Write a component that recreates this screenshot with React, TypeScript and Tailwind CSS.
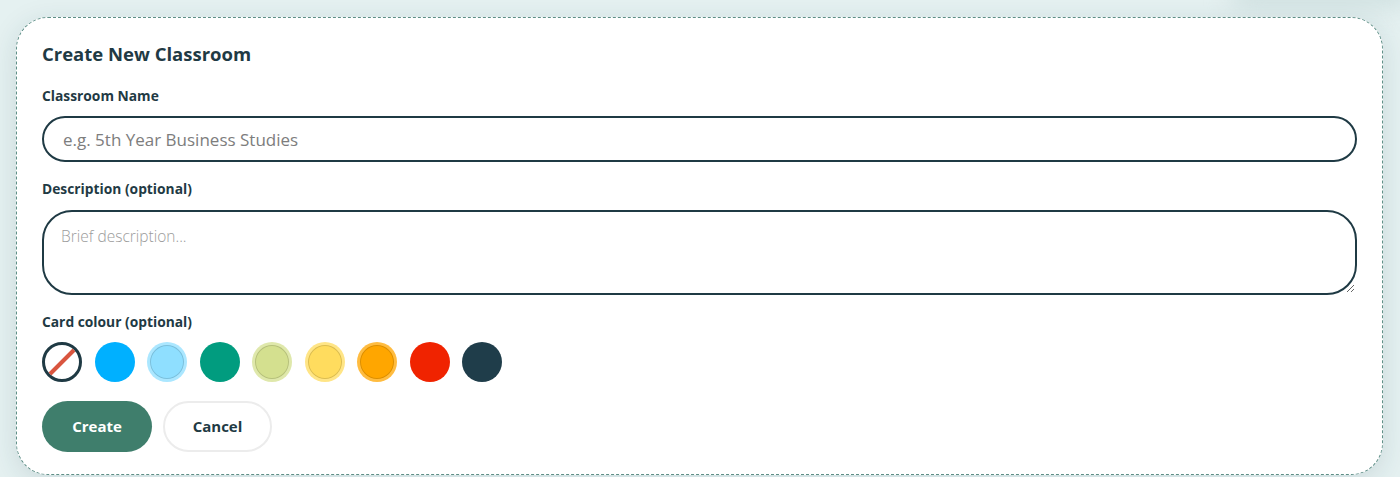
import React, { useState } from "react";

const swatches = [
  { id: "none", bg: "", ring: false },
  { id: "blue", bg: "bg-[#00b0ff]", ring: false },
  { id: "sky", bg: "bg-[#8fdfff]", ring: true },
  { id: "teal", bg: "bg-[#019c7f]", ring: false },
  { id: "lime", bg: "bg-[#d4e08f]", ring: true },
  { id: "yellow", bg: "bg-[#ffdc5e]", ring: true },
  { id: "orange", bg: "bg-[#ffa600]", ring: true },
  { id: "red", bg: "bg-[#f02300]", ring: false },
  { id: "navy", bg: "bg-[#1f3d4a]", ring: false },
];

export default function App() {
  const [colour, setColour] = useState("none");

  return (
    <div
      className="relative min-h-screen overflow-hidden bg-[#e5f1f1] px-[16px] pt-[17px] pb-[2px]"
      style={{ fontFamily: "'Open Sans', Lato, sans-serif" }}
    >
      <div className="absolute right-[-10px] top-[-22px] h-[30px] w-[180px] rounded-full bg-[#cfe0e0] blur-md" />

      <div className="relative mr-[1px] rounded-[32px] border border-dashed border-[#5f8f87] bg-white px-[25px] pt-[22px] pb-[22px] shadow-[0_6px_28px_rgba(31,61,74,0.13)]">
        <h2 className="text-[18.5px] leading-[28px] font-bold text-[#1f3a44]">
          Create New Classroom
        </h2>

        <form>
          <label
            htmlFor="name"
            className="mt-[18px] block text-[13.8px] leading-[20px] font-bold text-[#1f3a44]"
          >
            Classroom Name
          </label>
          <input
            id="name"
            type="text"
            placeholder="e.g. 5th Year Business Studies"
            className="mt-[10px] block h-[46px] w-full rounded-full border-2 border-[#1f3a44] bg-white px-[19px] text-[17px] text-[#1f3a44] outline-none placeholder:text-[#7d7d7d]"
          />

          <label
            htmlFor="description"
            className="mt-[17px] block text-[13.8px] leading-[20px] font-bold text-[#1f3a44]"
          >
            Description (optional)
          </label>
          <textarea
            id="description"
            placeholder="Brief description..."
            className="mt-[11px] block h-[85px] w-full rounded-[30px] border-2 border-[#1f3a44] bg-white px-[17px] py-[14px] text-[15.5px] leading-[20px] font-light text-[#1f3a44] outline-none placeholder:text-[#9b9b9b]"
          />

          <p className="mt-[17px] text-[13.8px] leading-[20px] font-bold text-[#1f3a44]">
            Card colour (optional)
          </p>
          <div className="mt-[10px] flex gap-[12.5px]">
            {swatches.map((s) =>
              s.id === "none" ? (
                <button
                  key={s.id}
                  type="button"
                  onClick={() => setColour(s.id)}
                  className="h-[40px] w-[40px] overflow-hidden rounded-full border-[3px] border-[#1f3a44] bg-white"
                >
                  <svg viewBox="0 0 34 34" className="h-full w-full">
                    <line x1="4" y1="30" x2="30" y2="4" stroke="#d9553f" strokeWidth="4" />
                  </svg>
                </button>
              ) : (
                <button
                  key={s.id}
                  type="button"
                  onClick={() => setColour(s.id)}
                  className={
                    s.ring
                      ? `h-[40px] w-[40px] rounded-full border-[3px] border-white/25 ${s.bg} shadow-[inset_0_0_0_1px_rgba(0,0,0,0.14)]`
                      : `h-[40px] w-[40px] rounded-full ${s.bg}`
                  }
                />
              )
            )}
          </div>

          <div className="mt-[19px] flex gap-[11px]">
            <button
              type="button"
              className="h-[51px] w-[110px] rounded-full bg-[#3f7e6c] text-[15px] font-bold text-white"
            >
              Create
            </button>
            <button
              type="button"
              className="h-[51px] w-[109px] rounded-full border-2 border-[#ececec] bg-white text-[15px] font-bold text-[#1f3a44]"
            >
              Cancel
            </button>
          </div>
        </form>
      </div>
    </div>
  );
}
